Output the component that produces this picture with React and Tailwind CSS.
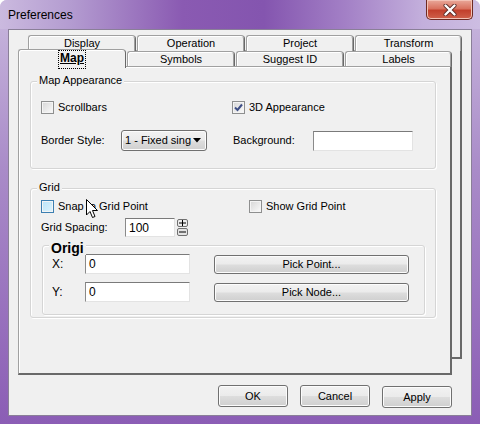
import React from 'react';

const FONT = "font-['Liberation_Sans',Arial,sans-serif]";

function Checkbox({ checked = false, hover = false }) {
  const box = hover
    ? 'border-[#3c7fb1] bg-[linear-gradient(135deg,#b9e4f9_0%,#dff3fc_100%)]'
    : 'border-[#8e8f8f] bg-[linear-gradient(135deg,#d6d6d6_0%,#fbfbfb_100%)]';
  return (
    <div className={`w-[13px] h-[13px] border ${box} shadow-[inset_0_0_0_1px_#f4f4f4] flex items-center justify-center shrink-0`}>
      {checked && (
        <svg width="9" height="9" viewBox="0 0 9 9">
          <path d="M1 4.5 L3.5 7 L8 1.5" fill="none" stroke="#3f4f86" strokeWidth="2" />
        </svg>
      )}
    </div>
  );
}

function TextBox({ value = '', className = '' }) {
  return (
    <div className={`bg-white border border-t-[#7a7a7a] border-l-[#8a8a8a] border-r-[#e3e3e3] border-b-[#e3e3e3] flex items-center pl-[3px] text-[11px] ${className}`}>
      {value}
    </div>
  );
}

function Button({ children, className = '' }) {
  return (
    <div className={`border border-[#707070] rounded-[3px] bg-[linear-gradient(180deg,#f2f2f2_0%,#ebebeb_48%,#dddddd_52%,#cfcfcf_100%)] shadow-[inset_0_0_0_1px_#fcfcfc] flex items-center justify-center text-[11px] ${className}`}>
      {children}
    </div>
  );
}

function Tab({ label, selected = false, w = 'w-[108px]' }) {
  if (selected) {
    return (
      <div className={`${w} h-[19px] -mt-[2px] relative z-20 bg-[#f0f0f0] border-l border-t border-r border-[#a0a0a0] border-r-[#696969] rounded-tl-[3px] rounded-tr-[4px] shadow-[inset_1px_1px_0_#ffffff] flex justify-center pt-[1px]`}>
        <span className="text-[12px] font-bold underline leading-[14px] outline outline-1 outline-dotted outline-black px-[1px]">Map</span>
      </div>
    );
  }
  return (
    <div className={`${w} h-full bg-[#f0f0f0] border-l border-t border-r border-[#a0a0a0] border-r-[#696969] rounded-tl-[3px] rounded-tr-[4px] shadow-[inset_1px_1px_0_#ffffff,inset_-1px_0_0_#a0a0a0] flex items-center justify-center text-[11px] leading-none`}>
      {label}
    </div>
  );
}

function Group({ title, titleClass = 'text-[11px]', titleTop = '-top-[7px]', className = '', children }) {
  return (
    <div className={`relative border border-[#d5d5d5] rounded-[3px] shadow-[inset_1px_1px_0_#ffffff,1px_1px_0_#ffffff] ${className}`}>
      <span className={`absolute ${titleTop} left-[6px] bg-[#f0f0f0] px-[2px] leading-none ${titleClass}`}>{title}</span>
      {children}
    </div>
  );
}

// mouse pointer resting over the "Snap to Grid Point" label
function Cursor() {
  return (
    <svg className="absolute left-[55px] top-[-1px]" width="13" height="20" viewBox="0 0 13 20">
      <path d="M0.5 0.5 L0.5 16 L4 12.5 L6.5 18.5 L9 17.5 L6.5 11.5 L11.5 11.5 Z" fill="#ffffff" stroke="#000000" strokeWidth="1" strokeLinejoin="round" />
    </svg>
  );
}

export default function App() {
  return (
    <div className={`${FONT} w-[480px] h-[424px] flex flex-col rounded-t-[7px] overflow-hidden bg-[linear-gradient(180deg,#c9b8de_0%,#a98bc8_40%,#8b5db5_100%)] text-black`}>
      {/* title bar */}
      <div className="relative h-[29px] shrink-0 flex items-center pl-[8px] bg-[linear-gradient(90deg,#cbbadf_0%,#b39bd0_15%,#8a5ab2_38%,#8455af_55%,#a380c6_72%,#c3afdc_88%,#cdbde2_100%)]">
        <span className="text-[12px] leading-none">Preferences</span>
        <div className="absolute right-[7px] top-0 w-[47px] h-[20px] rounded-b-[5px] border border-t-0 border-[#6e2a22] bg-[linear-gradient(180deg,#e9a89a_0%,#d9725f_45%,#c2402c_55%,#d0614b_100%)] shadow-[inset_0_0_0_1px_#f3c2b6] flex items-center justify-center">
          <svg width="14" height="12" viewBox="0 0 14 12">
            <path d="M2.5 1.5 L11.5 10.5 M11.5 1.5 L2.5 10.5" stroke="#5a2a26" strokeWidth="4" strokeLinecap="round" />
            <path d="M2.5 1.5 L11.5 10.5 M11.5 1.5 L2.5 10.5" stroke="#ffffff" strokeWidth="2.4" strokeLinecap="round" />
          </svg>
        </div>
      </div>

      {/* client area */}
      <div className="mx-[8px] h-[387px] bg-[#f0f0f0] border border-[#8a7f98] flex flex-col">
        <div className="relative ml-[9px] mt-[5px] w-[444px] h-[340px]">
          {/* back page */}
          <div className="absolute left-[10px] top-[15px] w-[434px] h-[309px] bg-[#f0f0f0] border border-[#a0a0a0] border-r-2 border-b-2 border-r-[#696969] border-b-[#696969]" />

          {/* back tab row */}
          <div className="relative flex gap-[1px] ml-[10px] h-[16px]">
            <Tab label="Display" />
            <Tab label="Operation" />
            <Tab label="Project" />
            <Tab label="Transform" w="w-[107px]" />
          </div>

          {/* front tab row */}
          <div className="relative z-10 flex gap-[1px] h-[15px]">
            <Tab label="Map" selected />
            <Tab label="Symbols" />
            <Tab label="Suggest ID" />
            <Tab label="Labels" w="w-[107px]" />
          </div>

          {/* front page */}
          <div className="relative w-[434px] h-[309px] bg-[#f0f0f0] border border-[#a0a0a0] border-r-2 border-b-2 border-r-[#696969] border-b-[#696969] shadow-[inset_1px_1px_0_#ffffff] flex flex-col">
            <Group title="Map Appearance" className="ml-[11px] mt-[14px] w-[406px] h-[88px] text-[11px]">
              <div className="flex items-center mt-[19px] pl-[10px] h-[13px]">
                <div className="w-[191px] flex items-center gap-[4px]">
                  <Checkbox />
                  <span>Scrollbars</span>
                </div>
                <div className="flex items-center gap-[4px]">
                  <Checkbox checked />
                  <span>3D Appearance</span>
                </div>
              </div>
              <div className="flex items-center mt-[16px] pl-[10px] h-[21px]">
                <span className="w-[80px]">Border Style:</span>
                <div className="w-[86px] h-[21px] rounded-[3px] border border-[#707070] bg-[linear-gradient(180deg,#f2f2f2_0%,#ebebeb_48%,#dddddd_52%,#cfcfcf_100%)] shadow-[inset_0_0_0_1px_#fcfcfc] flex items-center pl-[3px] pr-[5px]">
                  <span className="flex-1 whitespace-nowrap text-[11px]">1 - Fixed sing</span>
                  <svg width="8" height="5" viewBox="0 0 8 5" className="shrink-0">
                    <path d="M0 0 L8 0 L4 4.5 Z" fill="#000000" />
                  </svg>
                </div>
                <span className="ml-[26px] w-[80px]">Background:</span>
                <TextBox className="w-[100px] h-[20px]" />
              </div>
            </Group>

            <Group title="Grid" className="ml-[11px] mt-[19px] w-[406px] h-[130px] text-[11px]">
              <div className="relative flex items-center mt-[11px] pl-[10px] h-[13px]">
                <div className="w-[208px] flex items-center gap-[4px]">
                  <Checkbox hover />
                  <span>Snap to Grid Point</span>
                </div>
                <div className="flex items-center gap-[4px]">
                  <Checkbox />
                  <span>Show Grid Point</span>
                </div>
                <Cursor />
              </div>
              <div className="flex items-center mt-[5px] pl-[10px] h-[19px]">
                <span className="w-[84px]">Grid Spacing:</span>
                <TextBox value="100" className="w-[50px] h-[19px] text-[12px]" />
                <div className="ml-[2px] flex flex-col gap-[1px]">
                  <div className="w-[11px] h-[8px] rounded-[2px] border border-[#707070] bg-[#ececec] flex items-center justify-center">
                    <svg width="7" height="6" viewBox="0 0 7 6"><path d="M0 3 H7 M3.5 0 V6" stroke="#000" strokeWidth="1" /></svg>
                  </div>
                  <div className="w-[11px] h-[8px] rounded-[2px] border border-[#707070] bg-[#e4e4e4] flex items-center justify-center">
                    <svg width="7" height="2" viewBox="0 0 7 2"><path d="M0 1 H7" stroke="#000" strokeWidth="1" /></svg>
                  </div>
                </div>
              </div>
              <Group
                title="Origi"
                titleClass="text-[14px] font-bold"
                titleTop="-top-[5px]"
                className="ml-[11px] mt-[8px] w-[383px] h-[70px]"
              >
                <div className="flex items-center mt-[8px] pl-[9px] h-[20px]">
                  <span className="w-[33px] text-[12px]">X:</span>
                  <TextBox value="0" className="w-[105px] h-[20px] text-[12px]" />
                  <Button className="ml-[24px] w-[195px] h-[19px]">Pick Point...</Button>
                </div>
                <div className="flex items-center mt-[8px] pl-[9px] h-[20px]">
                  <span className="w-[33px] text-[12px]">Y:</span>
                  <TextBox value="0" className="w-[105px] h-[20px] text-[12px]" />
                  <Button className="ml-[24px] w-[195px] h-[19px]">Pick Node...</Button>
                </div>
              </Group>
            </Group>
          </div>
        </div>

        {/* dialog buttons */}
        <div className="flex justify-end gap-[12px] mt-[10px] pr-[19px]">
          <Button className="w-[70px] h-[22px]">OK</Button>
          <Button className="w-[70px] h-[22px]">Cancel</Button>
          <Button className="w-[70px] h-[22px] mt-[1px]">Apply</Button>
        </div>
      </div>
    </div>
  );
}
